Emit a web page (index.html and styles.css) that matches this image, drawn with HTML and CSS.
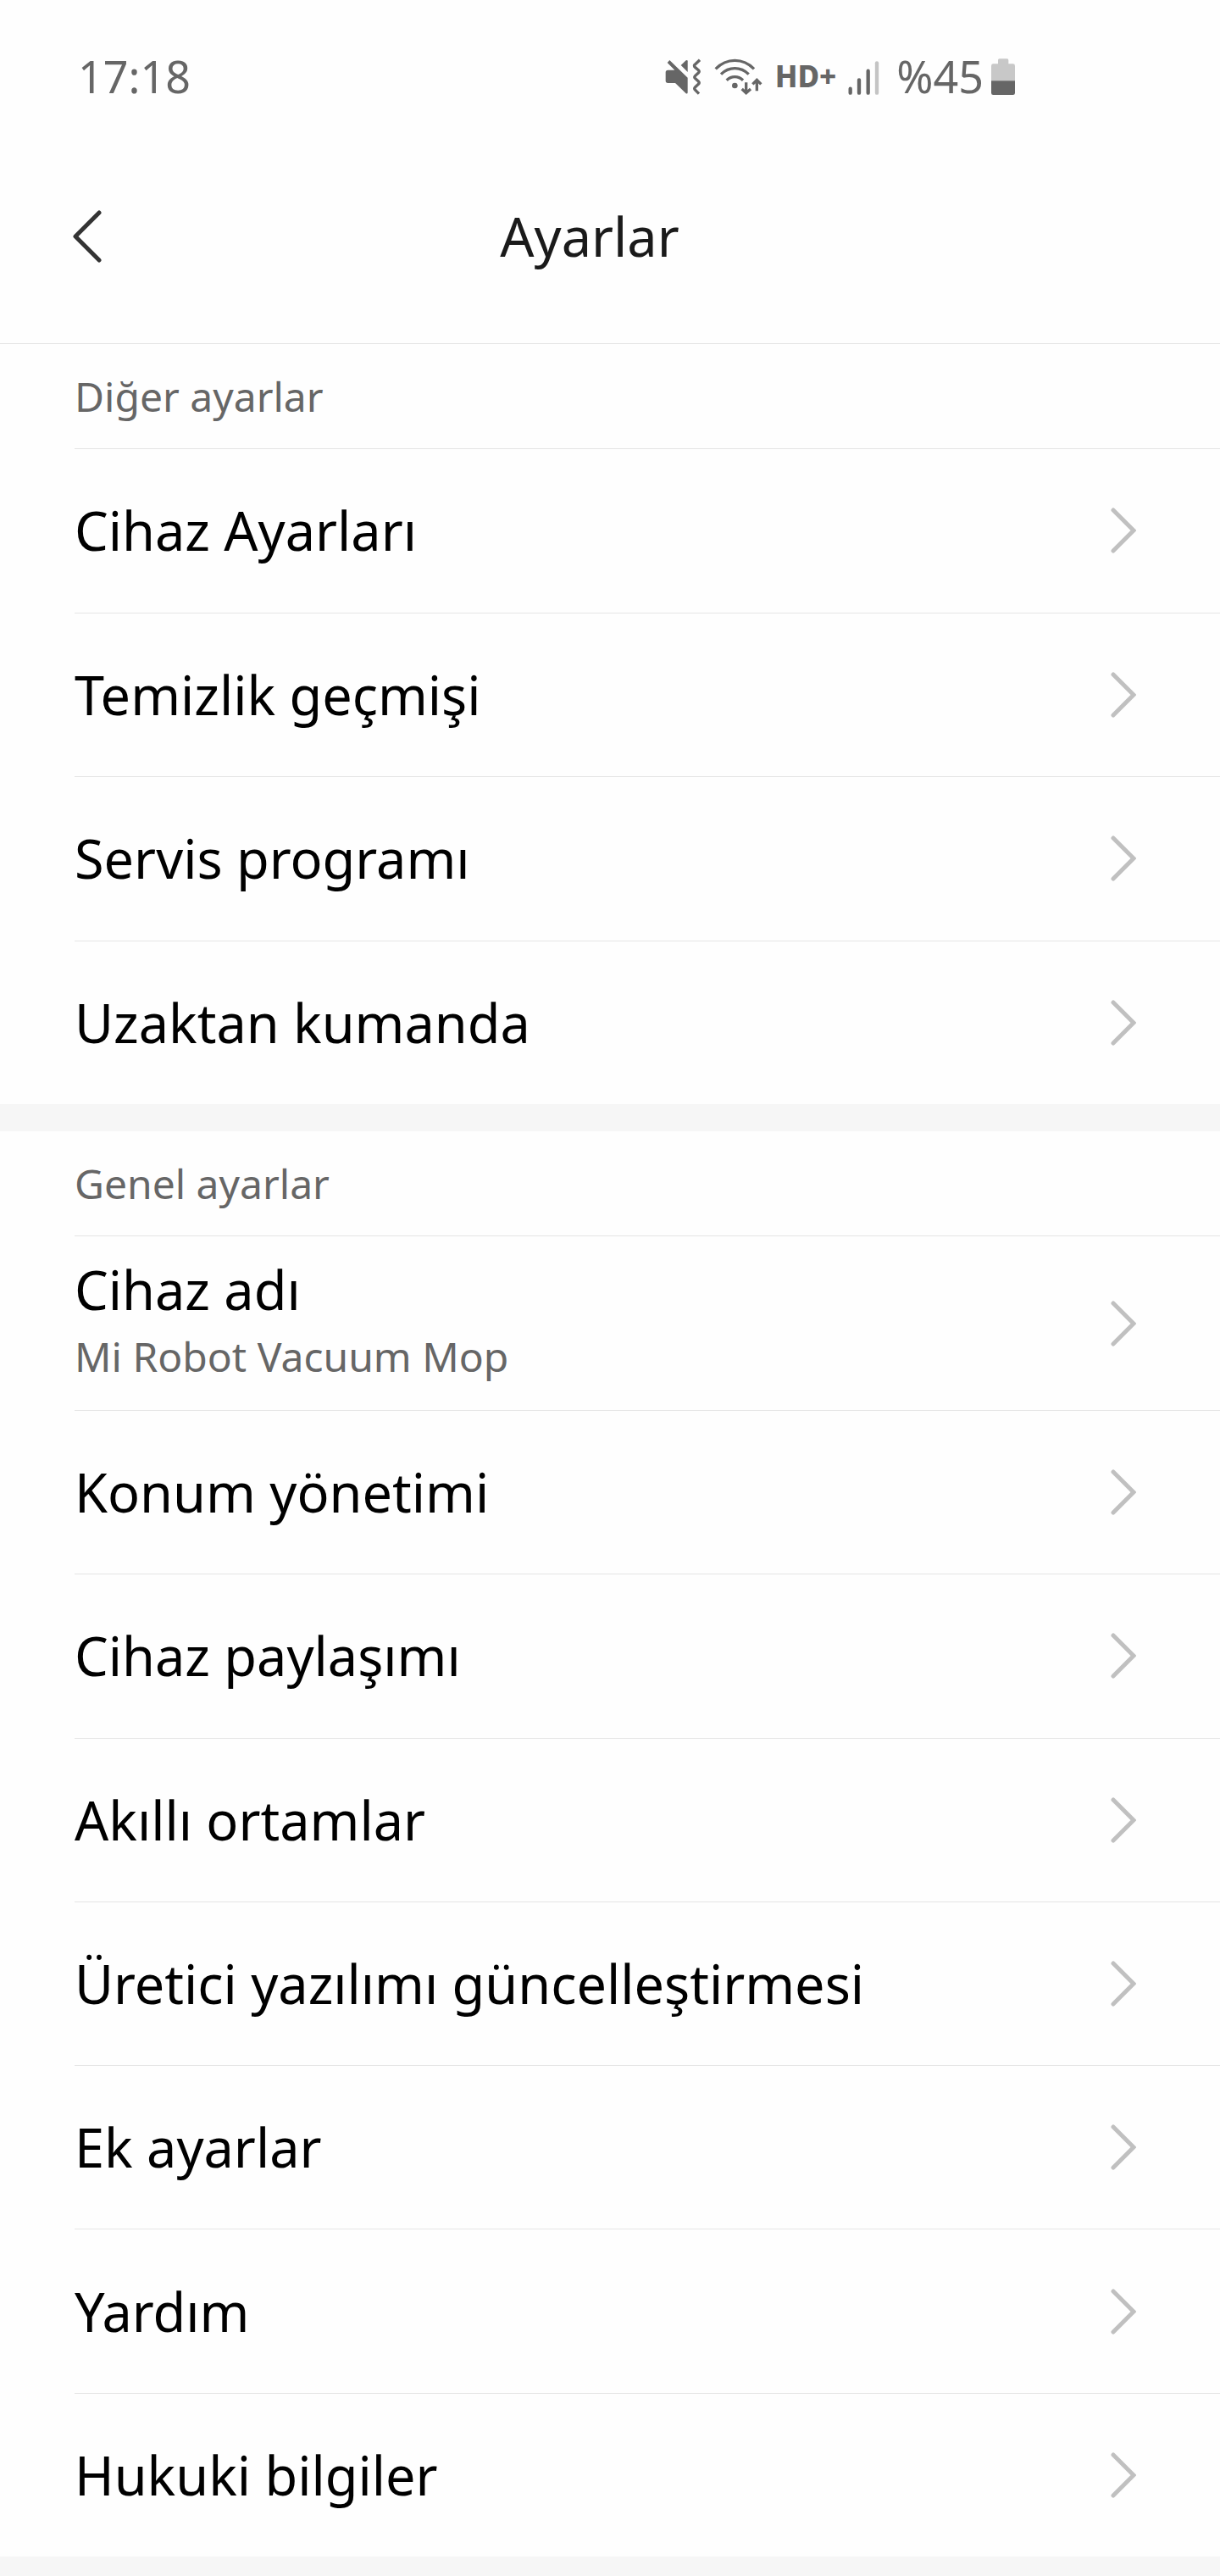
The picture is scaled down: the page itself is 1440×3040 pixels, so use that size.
FILE: index.html
```
<!DOCTYPE html>
<html lang="tr">
<head>
    <meta charset="utf-8">
    <meta name="viewport" content="width=device-width, initial-scale=1">
    <title>Ayarlar</title>
    <link rel="stylesheet" href="styles.css">
</head>

<body>
    <svg class="sprite" aria-hidden="true">
        <symbol id="chevron" viewBox="0 0 30 54">
            <path d="M3 3L27 27L3 51" fill="none" stroke="currentColor" stroke-width="5" stroke-linecap="round"/>
        </symbol>
    </svg>

    <div class="status-bar">
        <span class="time">17:18</span>
        <div class="status-icons">
            <svg class="icon-mute" viewBox="78 56 129 129">
                <path d="M88 97H112L86 71L94 62L158 124V177Q158 182 152 180L114 143H88Q80 143 80 135V105Q80 97 88 97Z"/>
                <path d="M134 80L152 63Q158 60 158 66V104Z"/>
                <path class="line" d="M201 61L182 79Q180 84 185 88L196 97Q201 102 196 107L185 117Q180 122 185 127L196 137Q201 142 196 147L185 157Q180 162 184 167L198 181"/>
            </svg>
            <svg class="icon-wifi" viewBox="252 56 171 129">
                <path class="line" d="M257 93C296 53 354 53 393 93M276 112C304 84 346 84 374 112M296 133C313 117 337 117 354 133"/>
                <circle cx="325" cy="152" r="10"/>
                <path class="line" d="M365 141V176M350 164L365 178L381 164M403 171V134M388 147L403 132L418 147"/>
            </svg>
            <span class="hd">HD+</span>
            <svg class="icon-signal" viewBox="725 56 111 129">
                <path class="bar" d="M733 163V178M764 132V178M796 100V178"/>
                <path class="bar off" d="M827 72V178"/>
            </svg>
            <span class="percent">%45</span>
            <svg class="icon-battery" viewBox="1230 56 84 129">
                <path class="off" d="M1230 135V82Q1230 75 1237 75H1254V62Q1254 57 1259 57H1286Q1291 57 1291 62V75H1307Q1314 75 1314 82V135Z"/>
                <path d="M1230 135H1314V178Q1314 185 1307 185H1237Q1230 185 1230 178Z"/>
            </svg>
        </div>
    </div>

    <header class="header">
        <button class="back" type="button" aria-label="Geri">
            <svg viewBox="0 0 34 62">
                <path d="M31 3L3 31L31 59" fill="none" stroke="currentColor" stroke-width="5" stroke-linecap="round" stroke-linejoin="round"/>
            </svg>
        </button>
        <h1>Ayarlar</h1>
    </header>

    <main>
        <section>
            <h2>Diğer ayarlar</h2>
            <ul>
                <li><a href="#">Cihaz Ayarları <svg class="chevron"><use href="#chevron"/></svg></a></li>
                <li><a href="#">Temizlik geçmişi <svg class="chevron"><use href="#chevron"/></svg></a></li>
                <li><a href="#">Servis programı <svg class="chevron"><use href="#chevron"/></svg></a></li>
                <li><a href="#">Uzaktan kumanda <svg class="chevron"><use href="#chevron"/></svg></a></li>
            </ul>
        </section>

        <section>
            <h2>Genel ayarlar</h2>
            <ul>
                <li class="two-line">
                    <a href="#">
                        <span class="label">Cihaz adı <small>Mi Robot Vacuum Mop</small></span>
                        <svg class="chevron"><use href="#chevron"/></svg>
                    </a>
                </li>
                <li><a href="#">Konum yönetimi <svg class="chevron"><use href="#chevron"/></svg></a></li>
                <li><a href="#">Cihaz paylaşımı <svg class="chevron"><use href="#chevron"/></svg></a></li>
                <li><a href="#">Akıllı ortamlar <svg class="chevron"><use href="#chevron"/></svg></a></li>
                <li><a href="#">Üretici yazılımı güncelleştirmesi <svg class="chevron"><use href="#chevron"/></svg></a></li>
                <li><a href="#">Ek ayarlar <svg class="chevron"><use href="#chevron"/></svg></a></li>
                <li><a href="#">Yardım <svg class="chevron"><use href="#chevron"/></svg></a></li>
                <li><a href="#">Hukuki bilgiler <svg class="chevron"><use href="#chevron"/></svg></a></li>
            </ul>
        </section>
    </main>
</body>
</html>
```

FILE: styles.css
```
* {
    box-sizing: border-box;
}

body {
    margin: 0;
    min-height: 100vh;
    display: flex;
    flex-direction: column;
    background-color: #fefefe;
    color: #000;
    font-family: "Noto Sans", "Open Sans", sans-serif;
    font-size: 63px;
}

.sprite {
    display: none;
}

/* status bar */
.status-bar {
    display: flex;
    align-items: center;
    justify-content: space-between;
    padding: 56px 242px 28px 92px;
    color: #666;
    font-size: 52px;
    line-height: 68px;
}

.status-icons {
    display: flex;
    align-items: center;
}

.status-icons svg {
    height: 43px;
    fill: #666;
}

.status-icons .line {
    fill: none;
    stroke: #666;
    stroke-width: 10;
}

.status-icons .bar {
    fill: none;
    stroke: #666;
    stroke-width: 13;
    stroke-linecap: round;
}

.status-icons .off {
    fill: #c8c8c8;
}

.status-icons .bar.off {
    stroke: #c4c4c4;
}

.icon-mute {
    width: 43px;
    margin-right: 15px;
}

.icon-wifi {
    width: 57px;
    margin-right: 15px;
}

.hd {
    margin-right: 14px;
    font-size: 35px;
    font-weight: 800;
}

.icon-signal {
    width: 37px;
    margin-right: 20px;
}

.percent {
    margin-right: 9px;
}

.icon-battery {
    width: 28px;
}

/* title bar */
.header {
    display: flex;
    align-items: center;
    height: 254px;
    padding-right: 168px;
    border-bottom: 1px solid #e5e5e5;
}

.back {
    display: flex;
    width: 120px;
    padding: 0 0 0 86px;
    border: none;
    background: none;
    color: #333;
    cursor: pointer;
}

.back svg {
    width: 34px;
    height: 62px;
    flex: none;
}

h1 {
    flex: 1;
    margin: 0;
    color: #1a1a1a;
    font-size: 63px;
    font-weight: 400;
    text-align: center;
}

/* setting lists, rows share whatever height is left on the screen */
main {
    flex: 1;
    display: flex;
    flex-direction: column;
    padding-bottom: 23px;
    background-color: #f6f6f6;
}

section {
    flex: 1 0 auto;
    display: flex;
    flex-direction: column;
    padding-left: 88px;
    background-color: #fefefe;
}

section + section {
    margin-top: 32px;
}

h2 {
    margin: 0;
    padding: 28px 0 27px;
    color: #666;
    font-size: 48px;
    font-weight: 400;
    line-height: 68px;
}

ul {
    flex: 1;
    display: flex;
    flex-direction: column;
    margin: 0;
    padding: 0;
    list-style: none;
}

li {
    flex: 1 0 193px;
    display: flex;
    border-top: 1px solid #e5e5e5;
}

li.two-line {
    flex: none;
    padding: 20px 0;
}

li a {
    flex: 1;
    display: flex;
    align-items: center;
    justify-content: space-between;
    padding-right: 99px;
    color: inherit;
    line-height: 86px;
    text-decoration: none;
}

.label {
    padding-bottom: 7px;
}

small {
    display: block;
    color: #666;
    font-size: 48px;
    line-height: 72px;
}

.chevron {
    width: 30px;
    height: 54px;
    flex: none;
    color: #c0c0c0;
}
```
